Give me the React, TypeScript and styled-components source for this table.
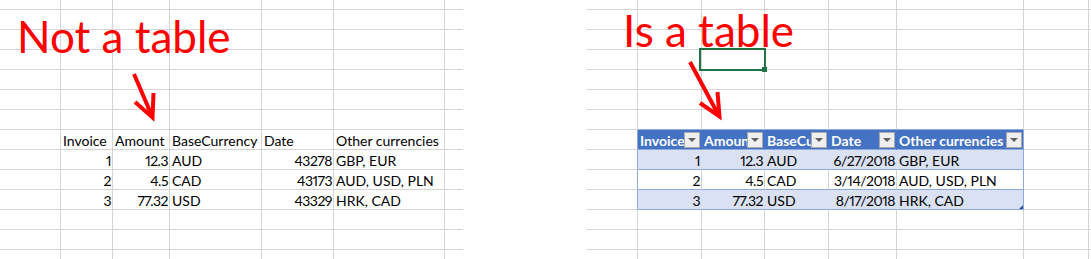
import React from 'react';
import styled, { createGlobalStyle } from 'styled-components';

const GRID = '#d4d4d4';
const BAND = '#d9e1f2';
const HEAD = '#4472c4';
const EDGE = '#8ea9db';
const RED = '#ff0000';

const GlobalStyle = createGlobalStyle`
  html, body { margin: 0; padding: 0; background: #ffffff; }
  body { font-family: Lato, "Noto Sans", sans-serif; }
`;

const Page = styled.div`
  display: flex;
  gap: 124px;
  width: 1091px;
  height: 259px;
  overflow: hidden;
  background: #ffffff;
`;

const SheetFrame = styled.div<{ $cols: string }>`
  position: relative;
  display: grid;
  grid-template-columns: ${(p) => p.$cols};
  grid-template-rows: 10px repeat(12, 20px) 9px;
`;

const Cell = styled.div<{
  $fill?: string;
  $right: string | null;
  $bottom: string | null;
  $align: 'left' | 'right';
  $head?: boolean;
}>`
  position: relative;
  box-sizing: border-box;
  display: flex;
  justify-content: ${(p) => (p.$align === 'right' ? 'flex-end' : 'flex-start')};
  background: ${(p) => p.$fill ?? 'transparent'};
  border-right: ${(p) => (p.$right ? `1px solid ${p.$right}` : 'none')};
  border-bottom: ${(p) => (p.$bottom ? `1px solid ${p.$bottom}` : 'none')};
  padding: 1px ${(p) => (p.$head || p.$align === 'right' ? '1px' : '2px')} 0 2px;
  overflow: hidden;
  white-space: nowrap;
  font-size: 14px;
  line-height: 19px;
  letter-spacing: ${(p) => (p.$align === 'right' ? '-0.5px' : 'normal')};
  font-variant-numeric: proportional-nums;
  color: ${(p) => (p.$head ? '#ffffff' : '#000000')};
  font-weight: ${(p) => (p.$head ? 700 : 400)};
`;

const HeaderLabel = styled.span`
  flex: 1 1 auto;
  min-width: 0;
  overflow: hidden;
  white-space: nowrap;
`;

const FilterButton = styled.span`
  flex: none;
  box-sizing: border-box;
  width: 16px;
  height: 16px;
  margin-top: 1px;
  border: 1px solid #a9a9a9;
  background: #efefef;
  display: flex;
  align-items: center;
  justify-content: center;
  &::after {
    content: '';
    border-left: 4px solid transparent;
    border-right: 4px solid transparent;
    border-top: 4px solid #5f5f5f;
  }
`;

const ResizeCorner = styled.span`
  position: absolute;
  right: 0;
  bottom: 0;
  width: 0;
  height: 0;
  border-left: 4px solid transparent;
  border-bottom: 4px solid #2f5597;
`;

const Callout = styled.div<{ $x: number; $y: number }>`
  position: absolute;
  left: ${(p) => p.$x}px;
  top: ${(p) => p.$y}px;
  font-family: Lato, "Noto Sans", sans-serif;
  font-size: 44px;
  line-height: 44px;
  color: ${RED};
  white-space: nowrap;
  pointer-events: none;
`;

const ArrowLayer = styled.svg`
  position: absolute;
  inset: 0;
  pointer-events: none;
  overflow: visible;
`;

const Selection = styled.div<{ $x: number; $y: number; $w: number; $h: number }>`
  position: absolute;
  left: ${(p) => p.$x}px;
  top: ${(p) => p.$y}px;
  width: ${(p) => p.$w}px;
  height: ${(p) => p.$h}px;
  box-sizing: border-box;
  border: 2px solid #217346;
  pointer-events: none;
`;

const FillHandle = styled.span`
  position: absolute;
  right: -3px;
  bottom: -3px;
  width: 5px;
  height: 5px;
  background: #217346;
`;

type Align = 'left' | 'right';

type CellSpec = {
  text?: string;
  align?: Align;
  fill?: string;
  right?: string | null;
  bottom?: string | null;
  head?: boolean;
  corner?: boolean;
};

const HEADERS = ['Invoice', 'Amount', 'BaseCurrency', 'Date', 'Other currencies'];
const ALIGNS: Align[] = ['right', 'right', 'left', 'right', 'left'];

const PLAIN_ROWS = [
  ['1', '12.3', 'AUD', '43278', 'GBP, EUR'],
  ['2', '4.5', 'CAD', '43173', 'AUD, USD, PLN'],
  ['3', '77.32', 'USD', '43329', 'HRK, CAD'],
];

const TABLE_ROWS = [
  ['1', '12.3', 'AUD', '6/27/2018', 'GBP, EUR'],
  ['2', '4.5', 'CAD', '3/14/2018', 'AUD, USD, PLN'],
  ['3', '77.32', 'USD', '8/17/2018', 'HRK, CAD'],
];

const ROW_COUNT = 14;
const HEADER_ROW = 7;

type Arrow = { line: [number, number, number, number]; wings: [number, number][]; tip: [number, number] };

function Sheet({
  cols,
  spec,
  children,
}: {
  cols: number[];
  spec: (r: number, c: number) => CellSpec;
  children?: React.ReactNode;
}) {
  const cells: React.ReactNode[] = [];
  for (let r = 0; r < ROW_COUNT; r++) {
    for (let c = 0; c < cols.length; c++) {
      const base: CellSpec = {
        right: c === cols.length - 1 ? null : GRID,
        bottom: r === ROW_COUNT - 1 ? null : GRID,
        align: 'left',
      };
      const s = { ...base, ...spec(r, c) };
      cells.push(
        <Cell
          key={`${r}-${c}`}
          $fill={s.fill}
          $right={s.right ?? null}
          $bottom={s.bottom ?? null}
          $align={s.align ?? 'left'}
          $head={s.head}
        >
          {s.head ? (
            <>
              <HeaderLabel>{s.text}</HeaderLabel>
              <FilterButton />
            </>
          ) : (
            s.text
          )}
          {s.corner && <ResizeCorner />}
        </Cell>
      );
    }
  }
  return <SheetFrame $cols={cols.map((w) => `${w}px`).join(' ')}>{cells}{children}</SheetFrame>;
}

function ArrowMark({ arrow, width, height }: { arrow: Arrow; width: number; height: number }) {
  const [x1, y1, x2, y2] = arrow.line;
  return (
    <ArrowLayer width={width} height={height} viewBox={`0 0 ${width} ${height}`}>
      <g stroke={RED} strokeWidth={4} strokeLinecap="butt" strokeLinejoin="miter" fill="none">
        <line x1={x1} y1={y1} x2={x2} y2={y2} />
        <polyline
          points={`${arrow.wings[0][0]},${arrow.wings[0][1]} ${arrow.tip[0]},${arrow.tip[1]} ${arrow.wings[1][0]},${arrow.wings[1][1]}`}
        />
      </g>
    </ArrowLayer>
  );
}

const LEFT_COLS = [61, 52, 57, 92, 72, 111, 18];
const RIGHT_COLS = [51, 64, 63, 64, 68, 127, 65, 2];

const leftSpec = (r: number, c: number): CellSpec => {
  const inTable = c >= 1 && c <= 5;
  if (!inTable) return {};
  if (r === HEADER_ROW) return { text: HEADERS[c - 1], align: 'left' };
  if (r > HEADER_ROW && r <= HEADER_ROW + 3) {
    return { text: PLAIN_ROWS[r - HEADER_ROW - 1][c - 1], align: ALIGNS[c - 1] };
  }
  return {};
};

const rightSpec = (r: number, c: number): CellSpec => {
  const inTable = c >= 1 && c <= 5;
  const tableRow = r >= HEADER_ROW && r <= HEADER_ROW + 3;
  if (c === 0 && tableRow) return { right: EDGE };
  if (!inTable) return {};
  if (r === HEADER_ROW - 1) return { bottom: EDGE };
  if (r === HEADER_ROW) {
    return {
      text: HEADERS[c - 1],
      head: true,
      fill: HEAD,
      right: c === 5 ? EDGE : HEAD,
      bottom: EDGE,
    };
  }
  if (tableRow) {
    const i = r - HEADER_ROW - 1;
    const banded = i !== 1;
    return {
      text: TABLE_ROWS[i][c - 1],
      align: ALIGNS[c - 1],
      fill: banded ? BAND : undefined,
      right: c === 5 ? EDGE : banded ? BAND : GRID,
      bottom: EDGE,
      corner: c === 5 && i === 2,
    };
  }
  return {};
};

const LEFT_ARROW: Arrow = {
  line: [134, 74, 151.5, 115],
  tip: [152.5, 117.5],
  wings: [
    [135, 102],
    [153.5, 93],
  ],
};

const RIGHT_ARROW: Arrow = {
  line: [103, 62, 131, 114],
  tip: [132.5, 116.5],
  wings: [
    [113, 103],
    [130.5, 92],
  ],
};

export default function App() {
  const leftWidth = LEFT_COLS.reduce((a, b) => a + b, 0);
  const rightWidth = RIGHT_COLS.reduce((a, b) => a + b, 0);
  return (
    <>
      <GlobalStyle />
      <Page>
        <Sheet cols={LEFT_COLS} spec={leftSpec}>
          <Callout $x={17} $y={14}>Not a table</Callout>
          <ArrowMark arrow={LEFT_ARROW} width={leftWidth} height={259} />
        </Sheet>
        <Sheet cols={RIGHT_COLS} spec={rightSpec}>
          <Callout $x={36} $y={8}>Is a table</Callout>
          <Selection $x={112} $y={48} $w={67} $h={23}>
            <FillHandle />
          </Selection>
          <ArrowMark arrow={RIGHT_ARROW} width={rightWidth} height={259} />
        </Sheet>
      </Page>
    </>
  );
}
